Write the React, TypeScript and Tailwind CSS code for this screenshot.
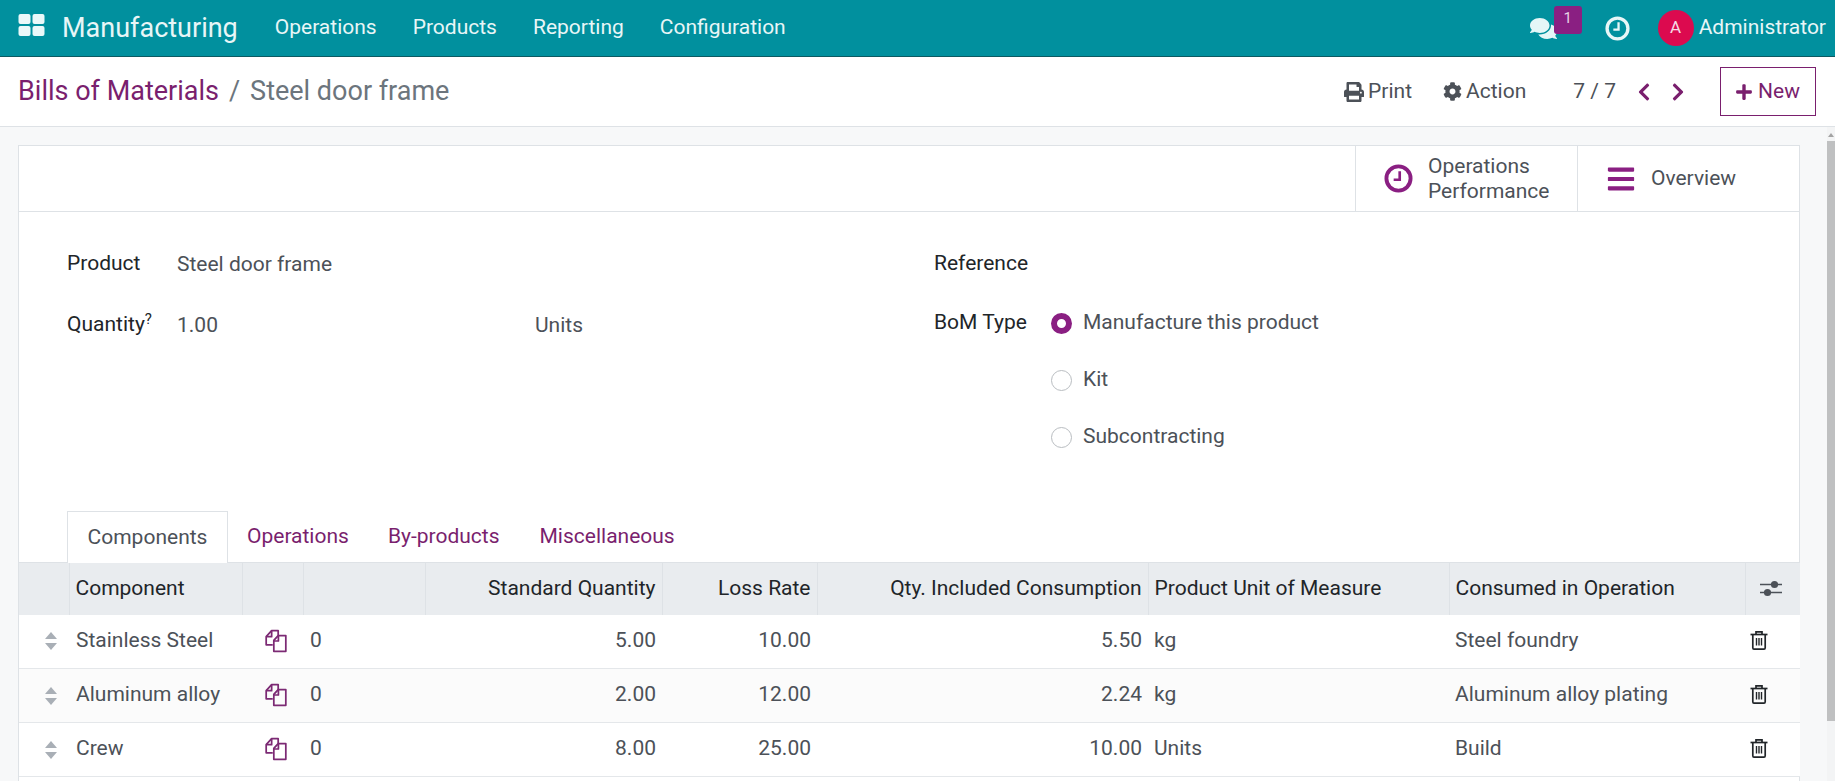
import { FaBars, FaChevronLeft, FaChevronRight, FaCog, FaComments, FaPlus, FaPrint } from "react-icons/fa";

const navLinks = ["Operations", "Products", "Reporting", "Configuration"];

const rows = [
  { name: "Stainless Steel", std: "5.00", loss: "10.00", qty: "5.50", uom: "kg", op: "Steel foundry", bg: "bg-white" },
  { name: "Aluminum alloy", std: "2.00", loss: "12.00", qty: "2.24", uom: "kg", op: "Aluminum alloy plating", bg: "bg-[#fbfbfb]" },
  { name: "Crew", std: "8.00", loss: "25.00", qty: "10.00", uom: "Units", op: "Build", bg: "bg-white" },
];

function AppsIcon() {
  return (
    <svg width="27" height="22" viewBox="0 0 27 22" className="fill-[#eaf8f9]">
      <rect x="0.5" y="0" width="12" height="10" rx="2" />
      <rect x="14.5" y="0" width="12" height="10" rx="2" />
      <rect x="0.5" y="12" width="12" height="10" rx="2" />
      <rect x="14.5" y="12" width="12" height="10" rx="2" />
    </svg>
  );
}

function ClockIcon({ size, color }: { size: number; color: string }) {
  return (
    <svg width={size} height={size} viewBox="0 0 24 24" fill="none" stroke={color}>
      <circle cx="12" cy="12" r="10" strokeWidth="3.2" />
      <path d="M13 6v7H8" strokeWidth="2.2" />
    </svg>
  );
}

function FilesIcon() {
  return (
    <svg width="24" height="24" viewBox="0 0 22 22" fill="none" stroke="#7c2a74" strokeWidth="1.6" strokeLinejoin="round">
      <path d="M8 14.5H2V7l5-5.5h6V6" />
      <path d="M7 1.5V7H2" />
      <path d="M9 20.5V10.5l4-4.5h7v14.5z" />
      <path d="M13.2 6v5H9" />
    </svg>
  );
}

function HandleIcon() {
  return (
    <svg width="14" height="20" viewBox="0 0 14 20" className="fill-[#a9afb6]">
      <path d="M7 1l6 7H1z" />
      <path d="M7 19l6-7H1z" />
    </svg>
  );
}

function TrashIcon() {
  return (
    <svg width="18" height="20" viewBox="0 0 18 20" fill="none" stroke="#212529" strokeWidth="1.7">
      <path d="M.5 4.5h17" />
      <path d="M6 4.5V1.8h6v2.7" />
      <path d="M2.8 4.5v13.2c0 .8.5 1.4 1.2 1.4h10c.7 0 1.2-.6 1.2-1.4V4.5" />
      <path d="M6.5 8v7.5M9 8v7.5M11.5 8v7.5" strokeWidth="1.4" />
    </svg>
  );
}

function AdjustIcon() {
  return (
    <svg width="22" height="20" viewBox="0 0 22 20" fill="none" stroke="#4c5158">
      <path d="M0 5.5h22M0 13.5h22" strokeWidth="1.4" />
      <circle cx="14.5" cy="5.5" r="3.6" fill="#4c5158" stroke="none" />
      <circle cx="7.5" cy="13.5" r="3.6" fill="#4c5158" stroke="none" />
    </svg>
  );
}

function Radio({ checked, label }: { checked?: boolean; label: string }) {
  return (
    <div className="flex h-[30px] items-center">
      {checked ? (
        <span className="h-[21px] w-[21px] rounded-full border-[6px] border-[#8a1f82] bg-white" />
      ) : (
        <span className="h-[21px] w-[21px] rounded-full border border-[#b9bdc1] bg-white" />
      )}
      <span className="ml-[11px] text-[#4c5158]">{label}</span>
    </div>
  );
}

export default function App() {
  return (
    <div className="flex h-screen flex-col overflow-hidden bg-[#f7f8f9] font-['Roboto',sans-serif] text-[21px] text-[#4c5158]">
      {/* top navbar */}
      <header className="flex h-[57px] shrink-0 items-center border-b border-[#0c5a62] bg-[#01909e] text-[#e8f6f7]">
        <div className="ml-[18px] mb-[6px]">
          <AppsIcon />
        </div>
        <span className="ml-[17px] pr-[1px] text-[27px]">Manufacturing</span>
        {navLinks.map((label) => (
          <a key={label} className="ml-[36px]">
            {label}
          </a>
        ))}
        <div className="ml-auto flex items-center">
          <div className="relative mr-[48px] flex items-center">
            <FaComments size={27} className="text-[#e4f6f7]" />
            <span className="absolute left-[24px] top-[-9px] flex h-[28px] w-[28px] justify-center rounded-[3px] bg-[#8a1f82] pt-[2px] text-[15px] leading-[20px] text-[#e6d3e3]">
              1
            </span>
          </div>
          <ClockIcon size={25} color="#e8f6f7" />
          <span className="ml-[28px] flex h-[36px] w-[36px] items-center justify-center rounded-full bg-[#dc0a4f] text-[17px] text-[#f5dbe4]">
            A
          </span>
          <span className="ml-[5px] mr-[9px]">Administrator</span>
        </div>
      </header>

      {/* control panel */}
      <div className="flex h-[70px] shrink-0 items-center border-b border-[#dee2e6] bg-white">
        <div className="ml-[18px] text-[27px] leading-none">
          <span className="text-[#7a1f6e]">Bills of Materials</span>
          <span className="mx-[10px] text-[#6c757d]">/</span>
          <span className="text-[#6c757d]">Steel door frame</span>
        </div>
        <div className="ml-auto flex items-center">
          <span className="flex items-center gap-[4px]">
            <FaPrint size={20} />
            Print
          </span>
          <span className="ml-[31px] flex items-center gap-[4px]">
            <FaCog size={19} />
            Action
          </span>
          <span className="ml-[47px]">7 / 7</span>
          <FaChevronLeft size={20} className="ml-[18px] text-[#7a1f6e]" />
          <FaChevronRight size={20} className="ml-[14px] text-[#7a1f6e]" />
          <button className="ml-[32px] mr-[19px] flex h-[49px] w-[96px] items-center justify-center gap-[5px] border border-[#7a1f6e] pr-[1px] text-[#7a1f6e]">
            <FaPlus size={18} />
            New
          </button>
        </div>
      </div>

      <div className="flex min-h-0 flex-1">
        <div className="min-w-0 flex-1 pl-[18px] pr-[27px] pt-[18px]">
          <div className="h-[700px] border border-[#dee2e6] bg-white">
            {/* stat buttons */}
            <div className="flex h-[66px] justify-end border-b border-[#dee2e6]">
              <div className="flex w-[222px] items-center border-l border-[#dee2e6] pl-[28px]">
                <ClockIcon size={29} color="#8a1f82" />
                <span className="ml-[15px] pt-[1px] leading-[25px]">
                  Operations
                  <br />
                  Performance
                </span>
              </div>
              <div className="flex w-[222px] items-center border-l border-[#dee2e6] pl-[28px]">
                <FaBars size={30} className="text-[#8a1f82]" />
                <span className="ml-[15px] pt-[1px]">Overview</span>
              </div>
            </div>

            {/* form groups */}
            <div className="grid h-[299px] grid-cols-[867px_1fr] pl-[48px] pt-[37px]">
              <div className="flex flex-col gap-[31px]">
                <div className="flex h-[30px] items-center">
                  <span className="w-[110px] text-[#212529]">Product</span>
                  <span className="pt-[1px]">Steel door frame</span>
                </div>
                <div className="flex h-[30px] items-center">
                  <span className="w-[110px] text-[#212529]">
                    Quantity<sup className="text-[15px]">?</sup>
                  </span>
                  <span className="w-[358px] pt-[1px]">1.00</span>
                  <span className="pt-[1px]">Units</span>
                </div>
              </div>
              <div className="flex flex-col">
                <div className="flex h-[30px] items-center text-[#212529]">Reference</div>
                <div className="mt-[29px] flex">
                  <span className="flex h-[30px] w-[117px] items-center text-[#212529]">BoM Type</span>
                  <div className="flex flex-col gap-[27px]">
                    <Radio checked label="Manufacture this product" />
                    <Radio label="Kit" />
                    <Radio label="Subcontracting" />
                  </div>
                </div>
              </div>
            </div>

            {/* tabs */}
            <div className="flex h-[51px] items-stretch pl-[48px]">
              <span className="relative z-10 -mb-px flex w-[161px] items-center justify-center border border-b-0 border-[#dee2e6] bg-white">
                Components
              </span>
              <span className="ml-[19px] flex items-center text-[#7a1f6e]">Operations</span>
              <span className="ml-[39px] flex items-center text-[#7a1f6e]">By-products</span>
              <span className="ml-[40px] flex items-center text-[#7a1f6e]">Miscellaneous</span>
            </div>

            {/* lines */}
            <table className="w-[1781px] table-fixed border-collapse">
              <colgroup>
                <col className="w-[50px]" />
                <col className="w-[173px]" />
                <col className="w-[61px]" />
                <col className="w-[122px]" />
                <col className="w-[237px]" />
                <col className="w-[155px]" />
                <col className="w-[331px]" />
                <col className="w-[301px]" />
                <col className="w-[296px]" />
                <col className="w-[55px]" />
              </colgroup>
              <thead>
                <tr className="h-[52px] border-t border-[#dee2e6] bg-[#e9ecef] text-[#212529]">
                  <th className="font-normal" />
                  <th className="border-l border-[#dee2e6] px-[6px] text-left font-normal">Component</th>
                  <th className="border-l border-[#dee2e6] font-normal" />
                  <th className="border-l border-[#dee2e6] font-normal" />
                  <th className="border-l border-[#dee2e6] px-[6px] text-right font-normal">Standard Quantity</th>
                  <th className="border-l border-[#dee2e6] px-[6px] text-right font-normal">Loss Rate</th>
                  <th className="border-l border-[#dee2e6] whitespace-nowrap px-[6px] text-right font-normal">Qty. Included Consumption</th>
                  <th className="border-l border-[#dee2e6] px-[6px] text-left font-normal">Product Unit of Measure</th>
                  <th className="border-l border-[#dee2e6] px-[6px] text-left font-normal">Consumed in Operation</th>
                  <th className="border-l border-[#dee2e6] pr-[4px] font-normal">
                    <span className="flex justify-center">
                      <AdjustIcon />
                    </span>
                  </th>
                </tr>
              </thead>
              <tbody>
                {rows.map((r) => (
                  <tr key={r.name} className={`h-[54px] border-b border-[#e4e7ea] ${r.bg}`}>
                    <td className="pl-[25px]">
                      <HandleIcon />
                    </td>
                    <td className="px-[7px] pb-[1px]">{r.name}</td>
                    <td className="pl-[22px] pb-[1px]">
                      <FilesIcon />
                    </td>
                    <td className="px-[7px] pb-[1px]">0</td>
                    <td className="px-[6px] pb-[1px] text-right">{r.std}</td>
                    <td className="px-[6px] pb-[1px] text-right">{r.loss}</td>
                    <td className="px-[6px] pb-[1px] text-right">{r.qty}</td>
                    <td className="px-[6px] pb-[1px]">{r.uom}</td>
                    <td className="px-[6px] pb-[1px]">{r.op}</td>
                    <td className="pl-[5px] pb-[3px]">
                      <TrashIcon />
                    </td>
                  </tr>
                ))}
              </tbody>
            </table>
          </div>
        </div>

        {/* scrollbar */}
        <div className="flex w-[8px] shrink-0 flex-col items-stretch bg-[#f3f4f5] pt-[6px]">
          <span className="mx-auto mb-[4px] h-0 w-0 border-x-[3px] border-b-[4px] border-x-transparent border-b-[#a3a3a3]" />
          <span className="h-[580px] bg-[#bfc0c1]" />
        </div>
      </div>
    </div>
  );
}
